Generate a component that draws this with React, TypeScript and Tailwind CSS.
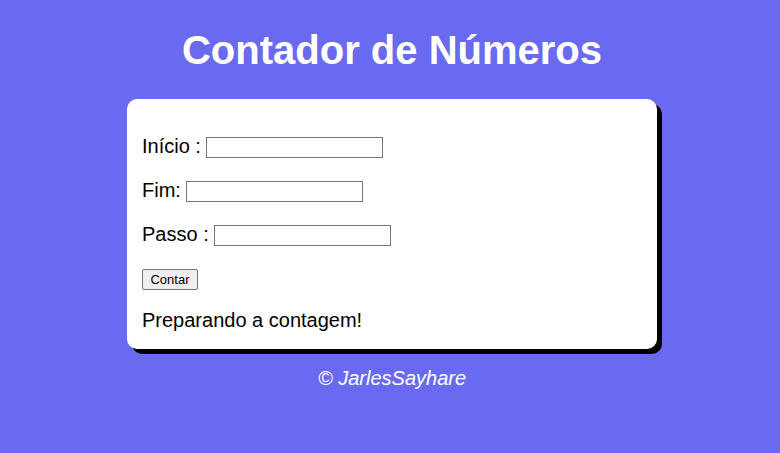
import React from 'react';

const App: React.FC = () => {
  return (
    <div className="min-h-[453px] bg-[#6a6af0] pl-1 pt-px font-['Liberation_Sans',Arial,sans-serif] text-black">
      {/* Title */}
      <h1 className="mt-[26px] mb-[26px] text-center text-[40px] leading-[46px] font-bold text-white">
        Contador de Números
      </h1>

      {/* Card */}
      <div className="mx-auto w-[530px] rounded-[10px] bg-white px-[15px] pt-[15px] pb-[17px] shadow-[5px_5px_0_#000]">
        <p className="my-5 flex items-start text-[20px] leading-[24px]">
          Início :
          <input type="text" className="mt-[3px] ml-[5px] h-[21px] w-[177px] border border-[#767676] bg-white" />
        </p>
        <p className="my-5 flex items-start text-[20px] leading-[24px]">
          Fim:
          <input type="text" className="mt-[3px] ml-[5px] h-[21px] w-[177px] border border-[#767676] bg-white" />
        </p>
        <p className="my-5 flex items-start text-[20px] leading-[24px]">
          Passo :
          <input type="text" className="mt-[3px] ml-[5px] h-[21px] w-[177px] border border-[#767676] bg-white" />
        </p>
        <p className="mt-5 flex h-[24px] items-start">
          <button className="mt-[3px] h-[21px] w-[56px] rounded-[2px] border border-[#767676] bg-[#efefef] text-[13px] leading-none">
            Contar
          </button>
        </p>
        <div className="mt-[18px] text-[20px] leading-[24px]">Preparando a contagem!</div>
      </div>

      {/* Footer */}
      <p className="mt-[18px] text-center text-[20px] leading-[23px] italic text-white">© JarlesSayhare</p>
    </div>
  );
};

export default App;
